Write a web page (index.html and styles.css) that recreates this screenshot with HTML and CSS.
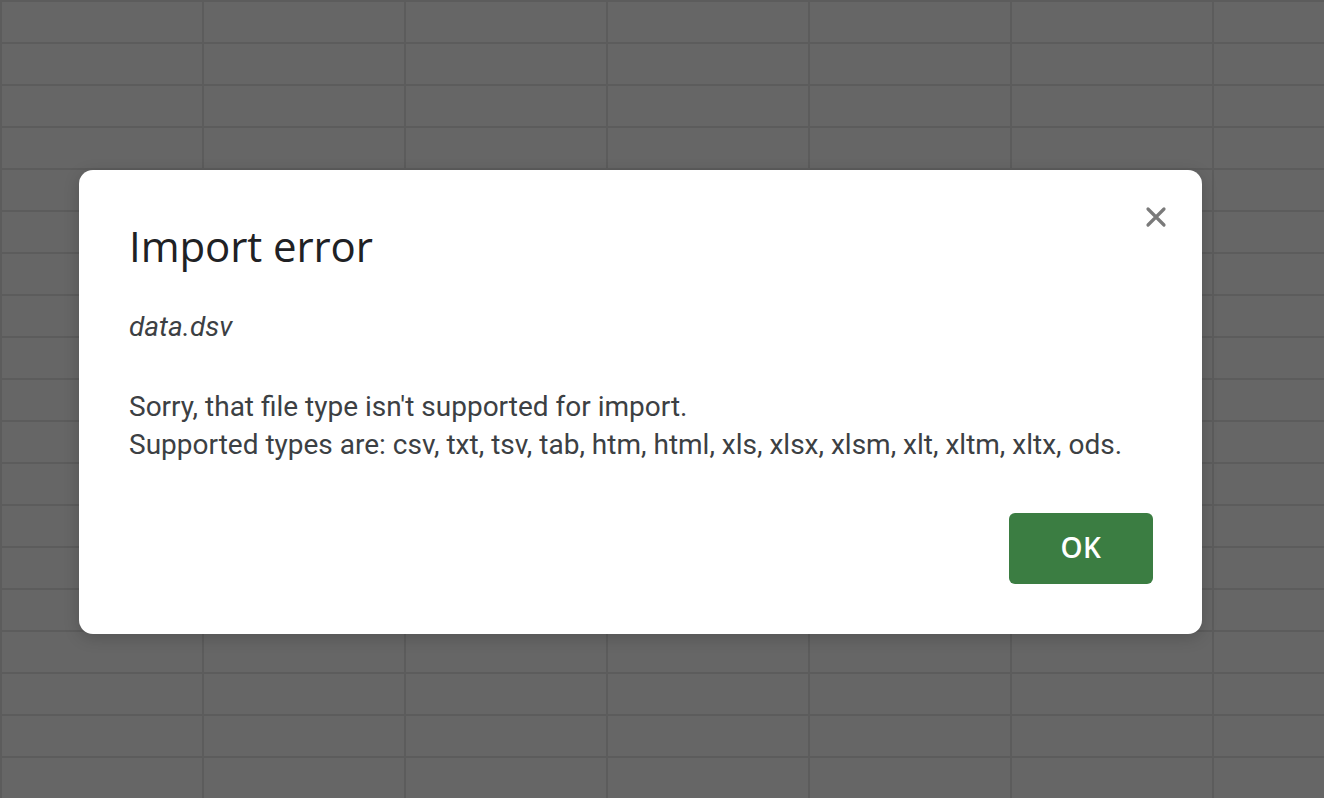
FILE: index.html
```html
<!DOCTYPE html>
<html>
<head>
<meta charset="utf-8">
<link rel="stylesheet" href="styles.css">
</head>
<body>
<div class="sheet">
  <div class="dialog">
    <button class="close" aria-label="Close">
      <svg width="22" height="22" viewBox="0 0 22 22"><path d="M3 3 L19 19 M19 3 L3 19" stroke="#7a7a7a" stroke-width="3.2" stroke-linecap="round" fill="none"/></svg>
    </button>
    <h1 class="title">Import error</h1>
    <p class="file">data.dsv</p>
    <p class="msg">Sorry, that file type isn't supported for import.<br>Supported types are: csv, txt, tsv, tab, htm, html, xls, xlsx, xlsm, xlt, xltm, xltx, ods.</p>
    <div class="actions">
      <button class="ok">OK</button>
    </div>
  </div>
</div>
</body>
</html>
```
FILE: styles.css
```css
html, body {
  margin: 0;
  padding: 0;
  height: 100%;
}
body {
  background-color: #666666;
  background-image:
    linear-gradient(to right, #5c5c5c 0, #5c5c5c 2px, transparent 2px),
    linear-gradient(to bottom, #5c5c5c 0, #5c5c5c 2px, transparent 2px);
  background-size: 202px 42px, 202px 42px;
  background-position: 0 0, 0 0;
  font-family: Roboto, "Liberation Sans", sans-serif;
  overflow: hidden;
}
.sheet {
  padding: 170px 0 0 79px;
}
.dialog {
  position: relative;
  box-sizing: border-box;
  width: 1123px;
  height: 464px;
  background: #ffffff;
  border-radius: 14px;
  box-shadow: 0 4px 16px rgba(0,0,0,0.18);
  padding: 52px 49px 50px 50px;
  display: flex;
  flex-direction: column;
}
.close {
  position: absolute;
  top: 36px;
  right: 35px;
  width: 22px;
  height: 22px;
  padding: 0;
  border: 0;
  background: none;
  filter: blur(0.6px);
}
.close svg { display: block; }
.title {
  margin: 0;
  font-family: "Open Sans", Roboto, sans-serif;
  font-weight: 400;
  font-size: 42px;
  line-height: 48px;
  color: #202124;
  letter-spacing: -0.1px;
}
.file {
  margin: 40px 0 0;
  font-style: italic;
  font-size: 28px;
  line-height: 34px;
  color: #3c4043;
}
.msg {
  margin: 44px 0 0;
  font-size: 28px;
  line-height: 38px;
  color: #3c4043;
}
.actions {
  margin-top: auto;
  display: flex;
  justify-content: flex-end;
}
.ok {
  width: 144px;
  height: 71px;
  border: 0;
  border-radius: 6px;
  background: #3b7d42;
  color: #ffffff;
  font-family: "Open Sans", Roboto, sans-serif;
  font-weight: 600;
  font-size: 28px;
  letter-spacing: 0.5px;
  padding: 0 0 4px;
}
```
